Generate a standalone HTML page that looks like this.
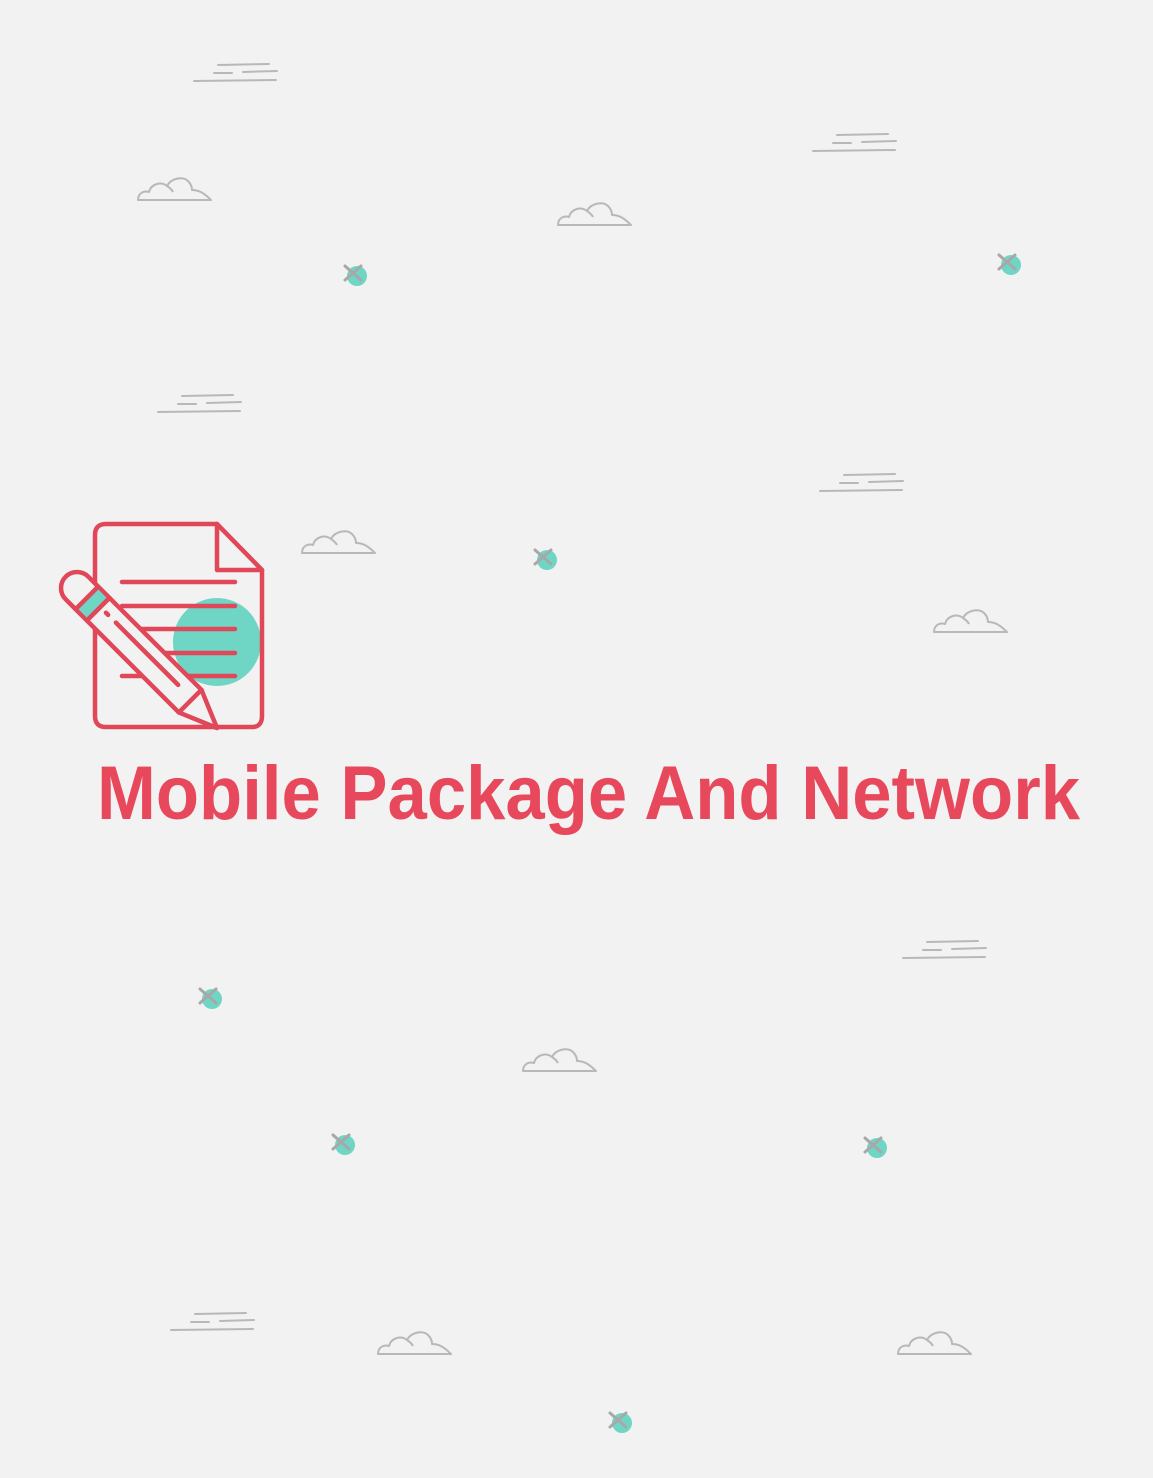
<!DOCTYPE html>
<html><head><meta charset="utf-8"><style>
html,body{margin:0;padding:0;background:#f2f2f2;}
svg{display:block}
</style></head><body>
<svg width="1153" height="1478" viewBox="0 0 1153 1478" xmlns="http://www.w3.org/2000/svg">
<defs>
<g id="wind" stroke="#b8b8b8" stroke-width="2" stroke-linecap="round" fill="none">
<path d="M24 1 L75 0 M20 9 L38 9 M49 8 L83 7 M0 17 L82 16"/>
</g>
<g id="cloud" stroke="#b8b8b8" stroke-width="2" fill="none" stroke-linejoin="round">
<path d="M1 24 C1 18 6 14 12 16 C14 8 24 5 30 10 C34 2 46 0 51 5 C54 8 55 11 55 14 C62 14 67 17 74 24 Z"/>
<path d="M30 10 C33 12 35 14 36 16"/>
</g>
<g id="dot">
<circle cx="13" cy="12" r="10" fill="#6fd6c6"/>
<path d="M1 2 L17 16 M17 2 L1 16" stroke="#a8a8a8" stroke-width="3" stroke-linecap="round"/>
</g>
</defs>
<rect width="1153" height="1478" fill="#f2f2f2"/>
<use href="#wind" x="194" y="64"/>
<use href="#wind" x="813" y="134"/>
<use href="#wind" x="158" y="395"/>
<use href="#wind" x="820" y="474"/>
<use href="#wind" x="903" y="941"/>
<use href="#wind" x="171" y="1313"/>
<use href="#cloud" x="137" y="176"/>
<use href="#cloud" x="557" y="201"/>
<use href="#cloud" x="301" y="529"/>
<use href="#cloud" x="933" y="608"/>
<use href="#cloud" x="522" y="1047"/>
<use href="#cloud" x="377" y="1330"/>
<use href="#cloud" x="897" y="1330"/>
<use href="#dot" x="344" y="264"/>
<use href="#dot" x="998" y="253"/>
<use href="#dot" x="534" y="548"/>
<use href="#dot" x="199" y="987"/>
<use href="#dot" x="332" y="1133"/>
<use href="#dot" x="864" y="1136"/>
<use href="#dot" x="609" y="1411"/>

<circle cx="217" cy="642" r="44" fill="#6fd6c6"/>
<circle cx="86" cy="594" r="11" fill="#6fd6c6"/>
<g stroke="#e04759" stroke-width="4.5" fill="none" stroke-linecap="round" stroke-linejoin="round">
<path d="M217 524 H106 Q95 524 95 535 V716 Q95 727 106 727 H252 Q262 727 262 716 V570 Z"/>
<path d="M217 524 V570 H262"/>
<path d="M122 582 H235 M122 606 H235 M122 629 H235 M122 653 H235 M122 676 H150 M170 676 H235"/>
</g>
<g transform="translate(77 588) rotate(45)" stroke="#e04759" stroke-width="4.5" fill="none" stroke-linejoin="round" stroke-linecap="round">
<path d="M0 -16 H160 L198 0 L160 16 H0 A16 16 0 0 1 0 -16 Z" fill="#f2f2f2"/>
<rect x="14" y="-14" width="16" height="28" fill="#6fd6c6" stroke="none"/>
<path d="M160 -16 V16"/>
<path d="M14 -16 V16 M30 -16 V16"/>
<path d="M38 -3 H41 M52 -3 H140"/>
</g>
<text x="97" y="819" font-family="Liberation Sans, sans-serif" font-weight="bold" font-size="76" fill="#e8485c" textLength="983" lengthAdjust="spacingAndGlyphs">Mobile Package And Network</text>
</svg>
</body></html>
